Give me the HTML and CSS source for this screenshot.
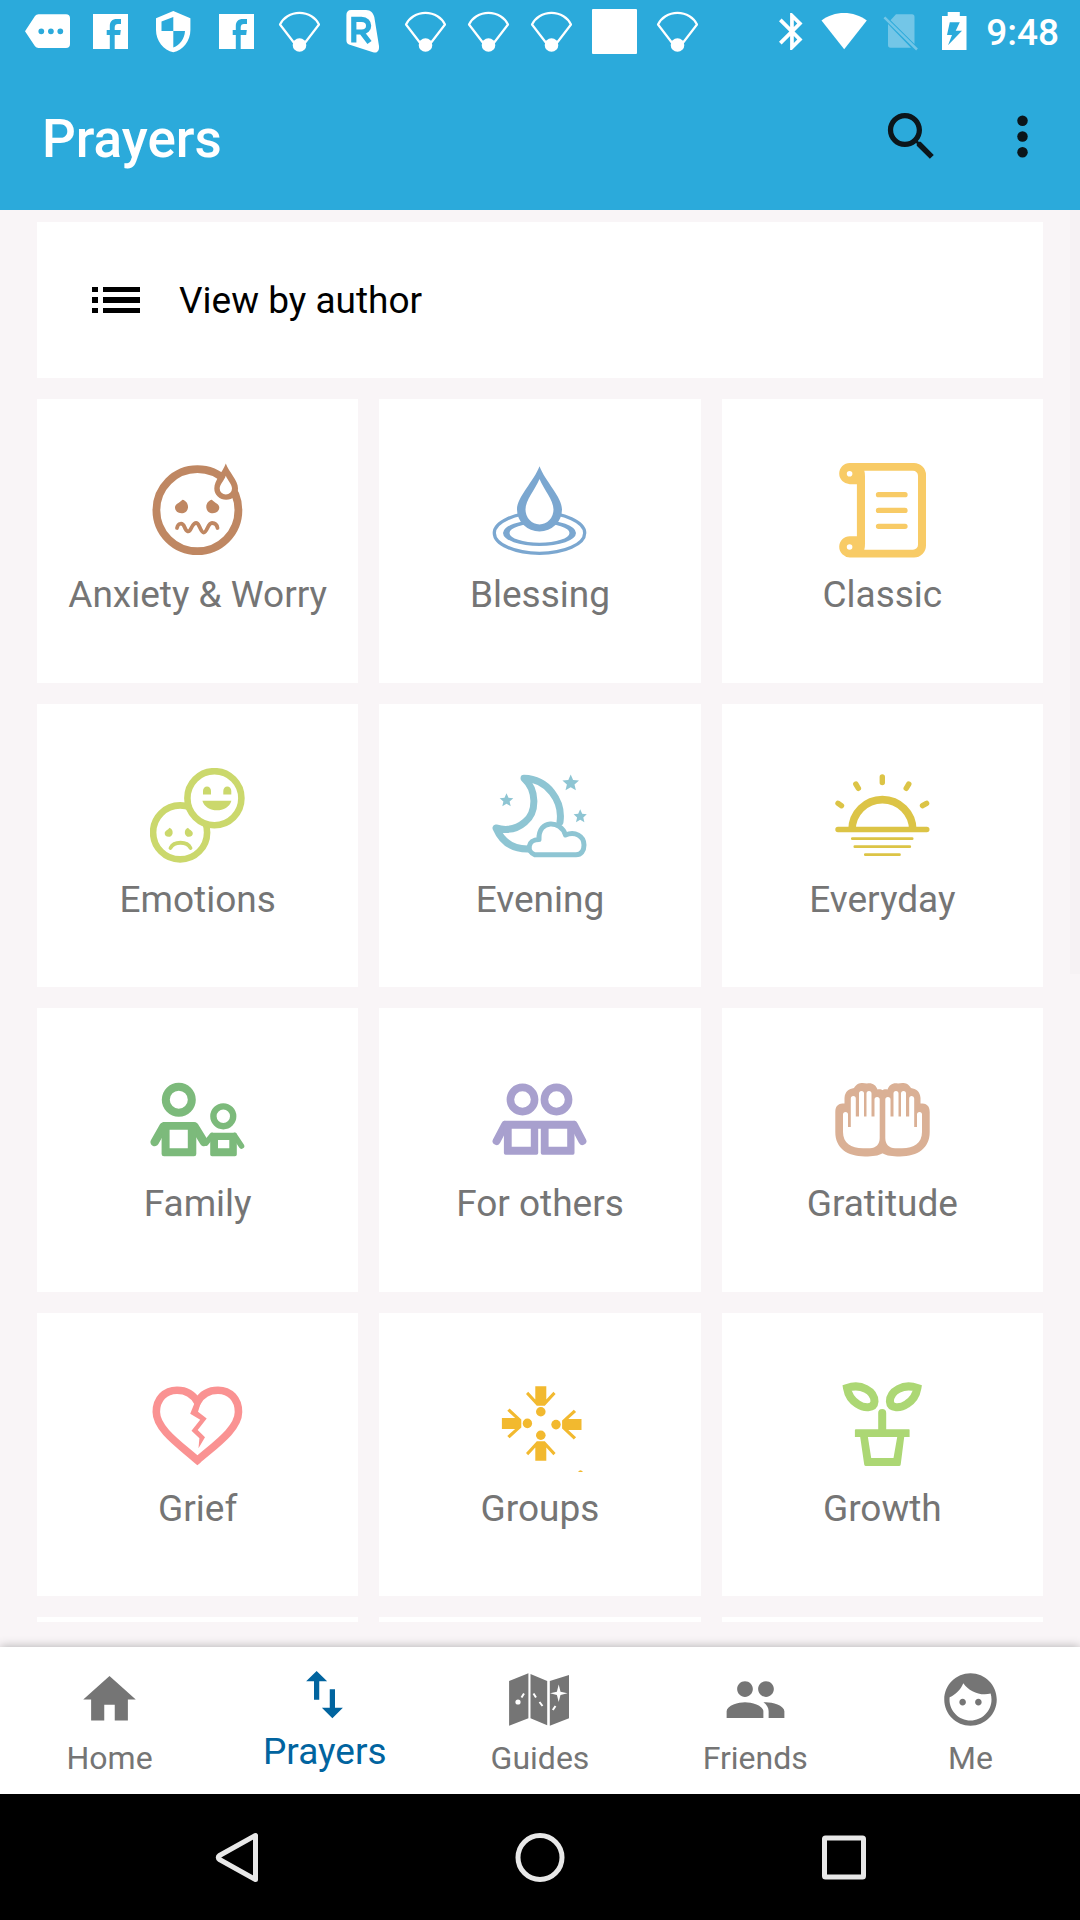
FILE: index.html
```html
<!DOCTYPE html>
<html lang="en">
<head>
<meta charset="utf-8">
<meta name="viewport" content="width=device-width, initial-scale=1">
<title>Prayers</title>
<link rel="stylesheet" href="styles.css">
</head>
<body>
<svg class="defs" aria-hidden="true">
  <symbol id="facebook" viewBox="0 0 48 48"><path fill="#fff" fill-rule="evenodd" d="M6 6H41V41H6zM22.800 41H27.700V27H33.200L33.800 22H27.700V19.500C27.700 17 29 16 31 16H34V11H30C25 11 22.800 13.500 22.800 18.500V22H19.700V27H22.800z"/></symbol>
  <symbol id="hotspot" viewBox="0 0 48 48"><path fill="none" stroke="#fff" stroke-width="2.200" stroke-linejoin="round" d="M4 16.500C7 10 14.500 4.800 23.500 4.800S40 10 43 16.500L26.500 38H20.500z"/><circle cx="23.500" cy="37" r="6.800" fill="#fff"/></symbol>
</svg>

<header class="header">
  <div class="status">
    <div class="status-notices">
      <svg class="notice" viewBox="0 0 48 48"><path fill="#fff" fill-rule="evenodd" d="M1 23.300L11 8Q12.300 6.300 14.500 6.300H42Q46 6.300 46 10.300V36Q46 40 42 40H14.500Q12.300 40 11 38.300zM14.400 23.300a2.900 2.900 0 1 0 5.800 0a2.900 2.900 0 1 0-5.800 0M24 23.300a2.900 2.900 0 1 0 5.800 0a2.900 2.900 0 1 0-5.800 0M33.400 23.300a2.900 2.900 0 1 0 5.800 0a2.900 2.900 0 1 0-5.800 0"/></svg>
      <svg class="notice"><use href="#facebook"/></svg>
      <svg class="notice" viewBox="0 0 48 48"><path fill="#fff" fill-rule="evenodd" d="M23.300 3L40.400 10.300V22C40.400 33 33 42 23.300 44.300C13.600 42 6 33 6 22V10.300zM23.300 9L11.500 13.500V23H23.300zM23.300 23V39.500C30 37 34.500 31 35 23z"/></svg>
      <svg class="notice"><use href="#facebook"/></svg>
      <svg class="notice"><use href="#hotspot"/></svg>
      <svg class="notice" viewBox="0 0 48 48"><path fill="#fff" d="M12 2H27C32 2 34 5 35.300 9L40 38C40.500 43 38 45.500 34 44.300L10 36.500C8 36 7.400 34 7.400 32V7C7.400 4 9 2 12 2z"/><path fill="none" stroke="#2baadb" stroke-width="5.200" d="M14.800 34.500V11.300H22.500C32 11.300 32 24 22.500 24H14.800M22.500 24L30.500 34.500"/></svg>
      <svg class="notice"><use href="#hotspot"/></svg>
      <svg class="notice"><use href="#hotspot"/></svg>
      <svg class="notice"><use href="#hotspot"/></svg>
      <svg class="notice" viewBox="0 0 48 48"><rect x="1" y="1" width="45" height="45" rx="1" fill="#fff"/></svg>
      <svg class="notice"><use href="#hotspot"/></svg>
    </div>
    <div class="status-system">
      <svg class="signal" viewBox="0 0 54 48"><path fill="#fff" transform="translate(6.750 1.300) scale(1.850)" d="M17.710 7.710L12 2h-1v7.590L6.410 5 5 6.410 10.590 12 5 17.590 6.410 19 11 14.410V22h1l5.710-5.710-4.300-4.290 4.300-4.290zM13 5.830l1.880 1.880L13 9.590V5.830zm1.880 10.460L13 18.170v-3.760l1.880 1.880z"/></svg>
      <svg class="signal" viewBox="0 0 54 48"><path fill="#fff" d="M4.500 12.500C17 2.500 37 2.500 49.800 12.500L27.200 41.300z"/></svg>
      <svg class="signal" viewBox="0 0 54 48"><path fill="#73c6e7" d="M25 6.300H41Q43.500 6.300 43.500 9V36L19.500 12.300zM17 16L40 39.700H19.500Q17 39.700 17 37z"/><path stroke="#73c6e7" stroke-width="2.500" d="M13.400 9.300L46 41.500"/></svg>
      <svg class="signal" viewBox="0 0 54 48"><path fill="#fff" fill-rule="evenodd" d="M22.700 4H34.800V8H41.500V42H17V8H22.700zM24.800 14.300L22 27H27L23 37.300 37 22.700H30.700L34.800 14.300z"/></svg>
      <time class="clock">9:48</time>
    </div>
  </div>
  <div class="toolbar">
    <h1 class="title">Prayers</h1>
    <button class="action" type="button" aria-label="Search"><svg class="icon" viewBox="0 0 24 24"><path d="M15.500 14h-.79l-.28-.27C15.410 12.590 16 11.110 16 9.500 16 5.910 13.090 3 9.500 3S3 5.910 3 9.500 5.910 16 9.500 16c1.610 0 3.090-.59 4.230-1.570l.27.28v.79l5 4.990L20.490 19l-4.990-5zm-6 0C7.010 14 5 11.990 5 9.500S7.010 5 9.500 5 14 7.010 14 9.500 11.990 14 9.500 14z"/></svg></button>
    <button class="action" type="button" aria-label="More options"><svg class="icon" viewBox="0 0 24 24"><circle cx="12" cy="6" r="2"/><circle cx="12" cy="12" r="2"/><circle cx="12" cy="18" r="2"/></svg></button>
  </div>
</header>

<main class="content">
  <a class="author" href="#authors">
    <svg class="list-icon" viewBox="0 0 48 28"><path d="M0 1h6v5H0zM11 1h37v5H11zM0 11h6v6H0zM11 11h37v6H11zM0 22h6v5H0zM11 22h37v5H11z"/></svg>
    <span>View by author</span>
  </a>
  <nav class="grid" aria-label="Prayer topics">
    <a class="tile" href="#anxiety">
      <svg class="topic" viewBox="0 0 95 95" fill="#bf8762"><circle cx="47.400" cy="47.200" r="41" fill="none" stroke="#bf8762" stroke-width="7.800"/><path d="M75.800 .5C79 9.500 88 17 88 25.500A11.850 11.300 0 0 1 64.300 25.500C64.300 17 72.600 9.500 75.800 .5z"/><path fill="#fff" d="M75.800 12.700C78 18 82 21 82 25.500A6.100 6 0 0 1 69.700 25.500C69.700 21 74 18 75.800 12.700z"/><path d="M32.500 36.800C36 37.500 38.300 41 38 44.500C37.500 48.500 35 50.200 31.500 50.200C27.500 50.200 25 47.500 25 44.500C25 41 29.500 40 32.500 36.800zM61.800 36.800C58.300 37.500 56 41 56.300 44.500C56.800 48.500 59.300 50.200 62.800 50.200C66.800 50.200 69.300 47.500 69.300 44.500C69.300 41 64.800 40 61.800 36.800z"/><path fill="none" stroke="#bf8762" stroke-width="3.800" stroke-linecap="round" d="M27 65C28 60 32.500 59 34.500 64S39 70 41 65.500S45.500 59 47.500 60.500S51 70 54 69.500S58 60 62 60S67 62 67.500 65"/></svg>
      <span class="label">Anxiety &amp; Worry</span></a>
    <a class="tile" href="#blessing">
      <svg class="topic" viewBox="0 0 95 95" fill="none" stroke="#7ba7d0"><ellipse cx="47.500" cy="70" rx="45.200" ry="20.300" stroke-width="3.300"/><path fill="#7ba7d0" fill-rule="evenodd" stroke="none" d="M11 70a36.500 13 0 0 0 73 0a36.500 13 0 0 0-73 0M17.500 70a30 9.700 0 0 1 60 0a30 9.700 0 0 1-60 0"/><path fill="#7ba7d0" stroke="none" d="M47.500 3.300C53 18 70 34 70 46.500A22.500 22 0 0 1 25 46.500C25 34 42 18 47.500 3.300z"/><path fill="#fff" stroke="none" d="M47.500 16C52 27 61.500 37 61.500 46.500A14 15 0 0 1 33.500 46.500C33.500 37 43 27 47.500 16z"/></svg>
      <span class="label">Blessing</span></a>
    <a class="tile" href="#classic">
      <svg class="topic" viewBox="0 0 95 95" fill="#f8cb66"><path fill-rule="evenodd" d="M14.800 0H79A12 12 0 0 1 91 12V82.400A12 12 0 0 1 79 94.400H14.800A10.600 10.600 0 0 1 14.800 73.200H21.900V21.200H14.800A10.600 10.600 0 0 1 14.800 0zM29.300 7.700Q30.200 10 30 16V78Q30.200 84 29.300 86.700H78A5 5 0 0 0 83 81.700V12.700A5 5 0 0 0 78 7.700zM11.800 10.700a2.800 2.800 0 1 0 5.600 0a2.800 2.800 0 1 0-5.600 0M11.800 84a2.800 2.800 0 1 0 5.600 0a2.800 2.800 0 1 0-5.600 0"/><path stroke="#f8cb66" stroke-width="5.300" stroke-linecap="round" d="M43.500 31.700H70M43.500 47.400H70M43.500 63.300H70"/></svg>
      <span class="label">Classic</span></a>
    <a class="tile" href="#emotions">
      <svg class="topic" viewBox="0 0 95 95" fill="#cbd86c"><g fill="#fff" stroke="#cbd86c" stroke-width="6.600"><circle cx="30.100" cy="64.400" r="27"/><circle cx="64.400" cy="30.200" r="27"/></g><path d="M53 26.500V23A4 4.500 0 0 1 61 23V26.500zM73.300 26.500V23A4 4.500 0 0 1 81.300 23V26.500zM52.400 32.700H81.400C78 45.500 56 45.500 52.400 32.700zM19.500 59.700C22 60.500 23 63 22.600 65.500C22 68 20.500 68.800 18.700 68.800C16 68.800 14.500 67 14.700 65C15 62.500 18 62 19.500 59.700zM38 59.700C35.500 60.500 34.500 63 34.900 65.500C35.500 68 37 68.800 38.800 68.800C41.500 68.800 43 67 42.800 65C42.500 62.500 39.500 62 38 59.700z"/><path fill="none" stroke="#cbd86c" stroke-width="3.800" stroke-linecap="round" d="M20.500 80C24 73 37 73 40.500 80"/></svg>
      <span class="label">Emotions</span></a>
    <a class="tile" href="#evening">
      <svg class="topic" viewBox="0 0 95 95" fill="#8ec5d3"><g fill="none" stroke="#8ec5d3" stroke-linecap="round" stroke-linejoin="round"><path stroke-width="7" d="M68 54C71 33 56 11 32 10.300C45 22 45 44 33 54C25 61 15 63 4 60C10 74 21 81.500 37 81"/><path fill="#fff" stroke-width="5" d="M43 86.800C34.500 84 35 71.500 47 71.500C46 51 69 52 73.500 67C83 63 92 68 92 77C92 83 89 86.800 84 86.800z"/></g><path d="M78.700 6.500L81.100 12 87 12.600 82.500 16.500 83.900 22.300 78.700 19.200 73.500 22.300 74.900 16.500 70.400 12.600 76.300 12zM14.500 25.300L16.500 29.800 21.300 30.300 17.600 33.400 18.700 38.200 14.500 35.700 10.300 38.200 11.400 33.400 7.700 30.300 12.500 29.800zM88.200 41.300L90.200 45.800 94.800 46.300 91.300 49.400 92.400 54.200 88.200 51.700 84 54.200 85.100 49.400 81.600 46.300 86.200 45.800z"/></svg>
      <span class="label">Evening</span></a>
    <a class="tile" href="#everyday">
      <svg class="topic" viewBox="0 0 95 95" fill="none" stroke="#dcc446" stroke-linecap="round"><path stroke-width="7.600" stroke-linecap="butt" d="M17 62A30.400 30.400 0 0 1 77.800 62"/><path stroke-width="5.400" d="M3 61.500H91.800M47.300 9V14.500M20.800 16L23.400 20.300M73.800 16L71.200 20.300M3 35.300L6.500 37.700M91.600 35.300L87.500 37.700"/><path stroke-width="2.700" d="M17.300 70.700H77.200M19.800 78.700H74.800M30.300 86.700H64.500"/></svg>
      <span class="label">Everyday</span></a>
    <a class="tile" href="#family">
      <svg class="topic" viewBox="0 0 95 95" fill="#7cba7b"><g fill="none" stroke="#7cba7b"><circle cx="28.800" cy="27.700" r="13" stroke-width="8"/><circle cx="73.300" cy="44.300" r="9.900" stroke-width="6.400"/><g stroke-linecap="round"><path stroke-width="8.500" d="M13.500 54.500L4.700 70M44.500 54.500L54 70"/><path stroke-width="5.600" d="M62 63.500L56 71M84.500 63.500L91.500 74"/></g></g><path fill-rule="evenodd" d="M13 50H44Q46.300 50 46.300 52.500V82Q46.300 84.300 44 84.300H14Q11.600 84.300 11.600 82V52.500zM19.600 57.700V76.300H37.800V57.700zM62 60.700H85Q86.800 60.700 86.800 63V82.500Q86.800 84.300 85 84.300H62Q60.200 84.300 60.200 82.500V62.500zM68 68V76.300H79.300V68z"/></svg>
      <span class="label">Family</span></a>
    <a class="tile" href="#others">
      <svg class="topic" viewBox="0 0 95 95" fill="#a8a0ce"><g fill="none" stroke="#a8a0ce"><circle cx="30.500" cy="27.500" r="12.100" stroke-width="7.600"/><circle cx="64.500" cy="27.500" r="12.100" stroke-width="7.600"/><path stroke-width="8" stroke-linecap="round" d="M13 53L4.600 69M82 53L90.400 69"/></g><path fill-rule="evenodd" d="M12.500 48.700H82.500V81Q82.500 82.700 81 82.700H50.500Q48.800 82.700 48.800 81V56.700H46.200V81Q46.200 82.700 44.500 82.700H13.600Q11.900 82.700 11.900 81V50zM19.700 56.700V74.700H38.800V56.700zM56.600 56.700V74.700H75.200V56.700z"/></svg>
      <span class="label">For others</span></a>
    <a class="tile" href="#gratitude">
      <svg class="topic" viewBox="0 0 95 95" fill="#dab095"><g id="hand"><path d="M48 81C43 84 38 84.400 30 84.400C12 84.400 .3 76 .3 60V40C.3 33 4 31.500 9.500 31.500V26C10 19 14 17 19 16C22 10.500 27 10.400 32 11.500C37 10.400 41 13 42.500 17.500C45 17 46.500 17.500 48 18.500z"/><path fill="#fff" d="M8 42.500a2.500 2.500 0 0 1 5 0V55H15.800V26.500a2.500 2.500 0 0 1 5 0V44.500H24V21.500a2.500 2.500 0 0 1 5 0V44.500H31.500V21.500a2.500 2.500 0 0 1 5 0V44.500H39.500V27.500a2.600 2.600 0 0 1 5.200 0V66C44.700 72 41 76.300 35 76.300H28C16 76.300 8 71 8 60z"/></g><use href="#hand" transform="translate(95 0) scale(-1 1)"/></svg>
      <span class="label">Gratitude</span></a>
    <a class="tile" href="#grief">
      <svg class="topic" viewBox="0 0 95 95" fill="#fa9292"><path fill="none" stroke="#fa9292" stroke-width="7.600" d="M47.400 83.300C30 68 6.300 52 6.300 35C6.300 22 15 13.200 27 13.200C36 13.200 43 17 47.400 25C52 17 59 13.200 68 13.200C80 13.200 88.500 22 88.500 35C88.500 52 65 68 47.400 83.300z"/><path d="M47 20L40.200 36.700 50.200 42.800 41.500 53.700 49.400 61.300 48.500 71.300 55 60.300 47.700 53 56.700 41.500 48 34.700 52 22z"/></svg>
      <span class="label">Grief</span></a>
    <a class="tile" href="#groups">
      <svg class="topic" viewBox="0 0 95 95" fill="#f2b92f"><g id="member"><ellipse cx="48.800" cy="58.200" rx="4.800" ry="4.700"/><path d="M44.800 64.300H52.800L63.600 76 61.400 78.300 54.300 70.500V83.700H43.300V70.500L36.200 78.300 34 76z"/></g><use href="#member" transform="rotate(180 48.800 46.500)"/><use href="#member" transform="translate(-1.600 0) rotate(90 48.800 46.400)"/><use href="#member" transform="translate(3.400 1.200) rotate(-90 48.800 46.400)"/><path d="M86 95Q88.500 91.500 91 95z"/></svg>
      <span class="label">Groups</span></a>
    <a class="tile" href="#growth">
      <svg class="topic" viewBox="0 0 95 95" fill="#acd774"><g fill="none" stroke="#acd774" stroke-width="8"><path id="leaf" d="M12 11C26 6 39.500 14 39.500 24.500C39 32 29 31.500 22.500 27C16 23 13 17 12 11z"/><use href="#leaf" transform="translate(94.400 0) scale(-1 1)"/><path stroke-linecap="round" d="M47.200 36V54"/></g><path fill-rule="evenodd" d="M20.500 52.300H74Q74.600 52.300 74.600 53V60H69.200L65.700 87.500Q65.500 89 64 89H31Q29.500 89 29.200 87.500L25.200 60H19.900V53zM32.900 60L36.200 81H58.500L62.200 60z"/></svg>
      <span class="label">Growth</span></a>
    <div class="tile"></div>
    <div class="tile"></div>
    <div class="tile"></div>
  </nav>
  <div class="scrollbar"></div>
</main>

<nav class="tabs" aria-label="Main">
  <a class="tab" href="#home"><svg class="icon" viewBox="0 0 24 24"><path d="M10 20v-6h4v6h5v-8h3L12 3 2 12h3v8z"/></svg><span>Home</span></a>
  <a class="tab tab-active" href="#prayers" aria-current="page"><svg class="icon" viewBox="0 0 24 24"><path d="M9 3L5 6.990h3V14h2V6.990h3L9 3zm7 14.010V10h-2v7.010h-3L15 21l4-3.990h-3z"/></svg><span>Prayers</span></a>
  <a class="tab" href="#guides"><svg class="icon" viewBox="0 0 63 63"><path d="M1.100 13L20.400 5.300V50.300L1.100 57.700zM22.500 6L39.200 13V57.300L22.500 50.300zM41.800 13L61 7V50.300L41.800 57.700z"/><circle cx="10" cy="34" r="2.600" fill="#fff"/><path stroke="#fff" stroke-width="2" d="M13.500 29.500L16 25.500M25.500 25.500L28 29.500M31.500 34L34.500 38M44.800 42L47.500 38"/><path fill="#fff" d="M50.700 16.500L52.500 23.700 59.500 25.300 52.500 27 50.700 34 48.900 27 42 25.300 48.900 23.700z"/></svg><span>Guides</span></a>
  <a class="tab" href="#friends"><svg class="icon" viewBox="0 0 24 24"><path d="M16 11c1.660 0 2.990-1.340 2.990-3S17.660 5 16 5c-1.660 0-3 1.340-3 3s1.340 3 3 3zm-8 0c1.660 0 2.990-1.340 2.990-3S9.660 5 8 5C6.340 5 5 6.340 5 8s1.340 3 3 3zm0 2c-2.330 0-7 1.170-7 3.500V19h14v-2.500c0-2.330-4.670-3.500-7-3.500zm8 0c-.29 0-.62.020-.97.050 1.160.84 1.970 1.970 1.970 3.450V19h6v-2.500c0-2.330-4.670-3.500-7-3.500z"/></svg><span>Friends</span></a>
  <a class="tab" href="#me"><svg class="icon" viewBox="0 0 24 24"><path d="M9 11.750c-.69 0-1.250.56-1.250 1.250s.56 1.250 1.250 1.250 1.250-.56 1.250-1.250-.56-1.250-1.250-1.250zm6 0c-.69 0-1.250.56-1.250 1.250s.56 1.250 1.250 1.250 1.250-.56 1.250-1.250-.56-1.250-1.250-1.250zM12 2C6.480 2 2 6.480 2 12s4.480 10 10 10 10-4.480 10-10S17.520 2 12 2zm0 18c-4.410 0-8-3.590-8-8 0-.29.020-.58.050-.86 2.360-1.050 4.230-2.980 5.210-5.370C11.070 8.330 14.050 10 17.420 10c.78 0 1.530-.09 2.250-.26.210.71.330 1.470.330 2.260 0 4.410-3.590 8-8 8z"/></svg><span>Me</span></a>
</nav>

<footer class="system-nav">
  <button class="system-button" type="button" aria-label="Back"><svg class="icon" viewBox="0 0 63 63"><path d="M50.500 9.500V53.500L14.500 33.500Q12 31.500 14.500 29.500z"/></svg></button>
  <button class="system-button" type="button" aria-label="Home"><svg class="icon" viewBox="0 0 63 63"><circle cx="32" cy="31.500" r="22"/></svg></button>
  <button class="system-button" type="button" aria-label="Recent apps"><svg class="icon" viewBox="0 0 63 63"><rect x="12.500" y="12" width="39" height="39" rx="1"/></svg></button>
</footer>
</body>
</html>
```
FILE: styles.css
```css
* { box-sizing: border-box; }

body {
  margin: 0;
  min-height: 100vh;
  display: flex;
  flex-direction: column;
  background: #f9f5f7;
  color: #757575;
  font-family: Roboto, "Noto Sans", sans-serif;
  font-size: 37px;
  line-height: 43px;
}

a { color: inherit; text-decoration: none; }
button { padding: 0; border: 0; background: none; font: inherit; }
svg { display: block; flex: none; }

.defs { position: absolute; width: 0; height: 0; }
.icon { width: 63px; height: 63px; }

/* Status bar and toolbar */
.header { background: #2baadb; color: #fff; }

.status {
  display: flex;
  justify-content: space-between;
  height: 63px;
  padding: 8px 21px 0 24px;
}
.status-notices { display: flex; gap: 15px; }
.status-system { display: flex; }
.notice { width: 48px; height: 48px; }
.signal { width: 54px; height: 48px; }
.clock { padding: 3px 0 0 7px; font-weight: 500; }

.toolbar {
  display: flex;
  align-items: center;
  gap: 48px;
  height: 147px;
  padding: 0 26px 0 42px;
}
.title {
  flex: 1;
  margin: 0;
  padding-top: 4px;
  font-size: 53px;
  font-weight: 500;
  line-height: 62px;
}
.action { fill: #0b161b; }

/* Topic list */
.content {
  position: relative;
  flex: 1;
  display: flex;
  flex-direction: column;
  gap: 21px;
  padding: 12px 37px 25px;
}
.author {
  display: flex;
  align-items: center;
  gap: 39px;
  height: 156px;
  padding-left: 55px;
  background: #fff;
  color: #000;
}
.list-icon { width: 48px; height: 28px; }

.grid {
  flex: 1;
  display: grid;
  grid-template-columns: repeat(3, 1fr);
  grid-template-rows: repeat(4, 1fr) 5px;
  gap: 21px;
}
.tile {
  display: flex;
  flex-direction: column;
  align-items: center;
  gap: 15px;
  background: #fff;
}
a.tile { padding: 64px 0 32px; }
.topic { width: 95px; height: 95px; }

.scrollbar {
  position: absolute;
  top: 0;
  right: 0;
  width: 10px;
  height: 764px;
  background: #f6f2f4;
}

/* Bottom tabs */
.tabs {
  position: relative;
  display: grid;
  grid-template-columns: repeat(5, 1fr);
  height: 147px;
  padding: 0 2px;
  background: #fff;
  box-shadow: 0 0 10px rgba(0, 0, 0, 0.3);
  font-size: 32px;
  line-height: 38px;
}
.tab {
  display: flex;
  flex-direction: column;
  align-items: center;
  gap: 8px;
  padding-top: 21px;
  fill: #757575;
}
.tab-active {
  gap: 4px;
  padding-top: 16px;
  color: #01649f;
  fill: #01649f;
  font-size: 37px;
  line-height: 43px;
}

/* Device buttons */
.system-nav {
  position: relative;
  display: grid;
  grid-template-columns: repeat(3, 1fr);
  height: 126px;
  padding: 0 85px;
  background: #000;
}
.system-button {
  display: flex;
  align-items: center;
  justify-content: center;
  fill: none;
  stroke: #e8e8e8;
  stroke-width: 5px;
  stroke-linejoin: round;
}
```
